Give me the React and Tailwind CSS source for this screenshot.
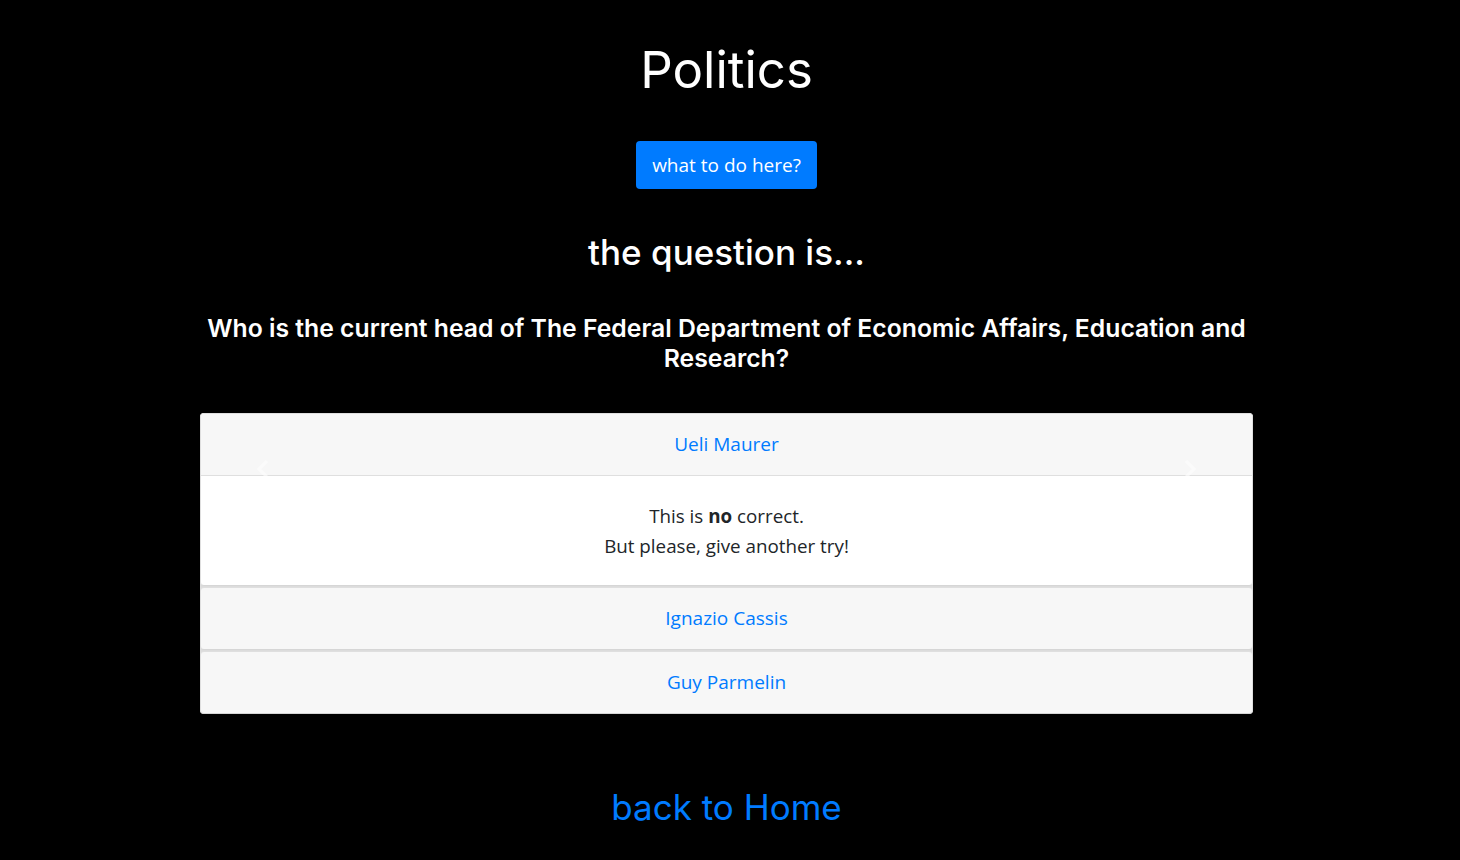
import React from "react";

function Card({ name, children }) {
  return (
    <div className="rounded-[4px] border border-[#dfdfdf] border-b-[#d6d6d6] bg-white overflow-hidden">
      <div className="h-[61px] flex items-center justify-center bg-[#f7f7f7] text-[#007bff] text-[19px] font-['Open_Sans','Noto_Sans',sans-serif]">
        {name}
      </div>
      {children}
    </div>
  );
}

export default function App() {
  return (
    <div className="min-h-[860px] w-full bg-black flex flex-col items-center pr-[7px]">
      <h1 className="mt-[40px] text-white text-[51px] leading-[60px] font-normal font-['Inter',sans-serif]">Politics</h1>
      <button className="mt-[41px] h-[48px] px-[16px] rounded-[4px] bg-[#007bff] text-white text-[19px] font-['Open_Sans','Noto_Sans',sans-serif]">
        what to do here?
      </button>
      <h2 className="mt-[41px] text-white text-[35px] leading-[44px] font-medium font-['Inter',sans-serif]">the question is...</h2>
      <h3 className="mt-[39px] w-[1060px] text-center text-white text-[24.75px] leading-[30px] font-semibold font-['Inter',sans-serif]">
        Who is the current head of The Federal Department of Economic Affairs, Education and Research?
      </h3>
      <div className="relative mt-[40px] w-[1053px] flex flex-col gap-[1px] bg-[#dcdcdc] rounded-[4px]">
        <Card name="Ueli Maurer">
          <div className="border-t border-[#dfdfdf] h-[110px] flex flex-col items-center justify-center text-[#212529] text-[18.8px] leading-[30px] font-['Open_Sans','Noto_Sans',sans-serif]">
            <div>This is <b>no</b> correct.</div>
            <div>But please, give another try!</div>
          </div>
        </Card>
        <Card name="Ignazio Cassis" />
        <Card name="Guy Parmelin" />
        <svg className="absolute left-[55px] top-[46px] opacity-60" width="16" height="20" viewBox="0 0 16 20">
          <path d="M12 2 L4 10 L12 18" fill="none" stroke="white" strokeWidth="3" />
        </svg>
        <svg className="absolute left-[982px] top-[46px] opacity-60" width="16" height="20" viewBox="0 0 16 20">
          <path d="M4 2 L12 10 L4 18" fill="none" stroke="white" strokeWidth="3" />
        </svg>
      </div>
      <a className="mt-[71px] text-[#007bff] text-[35px] leading-[44px] font-['Inter',sans-serif]">back to Home</a>
    </div>
  );
}
